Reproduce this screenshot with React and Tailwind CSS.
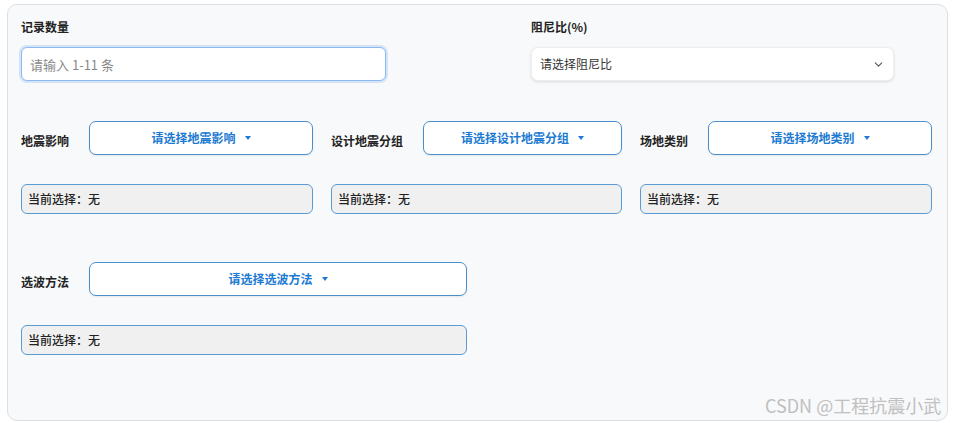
import React from 'react';
import { ChevronDown } from 'lucide-react';

const FONT = { fontFamily: '"Microsoft YaHei", "Noto Sans CJK SC", "Noto Sans", sans-serif' };

function DropButton({ text }) {
  return (
    <button
      type="button"
      className="flex-1 h-[34px] rounded-[7px] border border-[#4a8fcb] bg-white flex items-center justify-center text-[12px] font-bold text-[#1c7ad1] shadow-[0_1px_2px_rgba(0,0,0,0.08)]"
    >
      {text}
      <span className="ml-[9px] inline-block w-0 h-0 border-x-[3px] border-x-transparent border-t-[4px] border-t-[#1c7ad1]" />
    </button>
  );
}

function Current() {
  return (
    <div className="h-[30px] rounded-[6px] border border-[#5b9bd5] bg-[#f0f0f0] flex items-center pl-[6px] text-[12px] font-medium text-[#222]">
      当前选择：无
    </div>
  );
}

function Field({ label, text, width }) {
  return (
    <div className={width}>
      <div className="flex items-center gap-5">
        <span className="text-[12px] font-semibold text-[#222] whitespace-nowrap mt-[6px]">{label}</span>
        <DropButton text={text} />
      </div>
      <div className="mt-[29px]">
        <Current />
      </div>
    </div>
  );
}

export default function App() {
  return (
    <div className="relative w-[953px] h-[423px] bg-white" style={FONT}>
      <div className="absolute left-0 top-0 h-[423px] w-[953px]">
        <div className="ml-[7px] mt-[4px] w-[941px] h-[417px] rounded-[10px] border border-[#dcdfe3] bg-[#f8f9fa] pl-[13px] pt-[13px]">
          <div className="flex">
            <div className="w-[365px]">
              <div className="text-[12px] font-semibold text-[#222] leading-[18px]">记录数量</div>
              <input
                placeholder="请输入 1-11 条"
                className="mt-[11px] w-full h-[34px] rounded-[6px] border border-[#8db9f2] bg-white px-[8px] text-[13px] text-[#333] placeholder:text-[#8a8a8a] outline-none shadow-[0_0_0_2px_rgba(96,150,240,0.22)]"
              />
            </div>
            <div className="ml-[145px] w-[363px]">
              <div className="text-[12px] font-semibold text-[#222] leading-[18px]">阻尼比(%)</div>
              <div className="mt-[11px] h-[34px] rounded-[7px] border border-[#eceef1] bg-white flex items-center justify-between pl-[8px] pr-[8px] text-[12px] text-[#333] shadow-[0_1px_3px_rgba(0,0,0,0.12)]">
                <span>请选择阻尼比</span>
                <ChevronDown size={13} strokeWidth={2} className="text-[#555]" />
              </div>
            </div>
          </div>

          <div className="mt-[40px] flex gap-[18px]">
            <Field label="地震影响" text="请选择地震影响" width="w-[292px]" />
            <Field label="设计地震分组" text="请选择设计地震分组" width="w-[291px]" />
            <Field label="场地类别" text="请选择场地类别" width="w-[292px]" />
          </div>

          <div className="mt-[48px] flex">
            <Field label="选波方法" text="请选择选波方法" width="w-[446px]" />
          </div>
        </div>
      </div>
      <div className="absolute left-[765px] top-[392px] text-[18px] text-[#c0c0c0] whitespace-nowrap leading-[26px]">
        CSDN @工程抗震小武
      </div>
    </div>
  );
}
